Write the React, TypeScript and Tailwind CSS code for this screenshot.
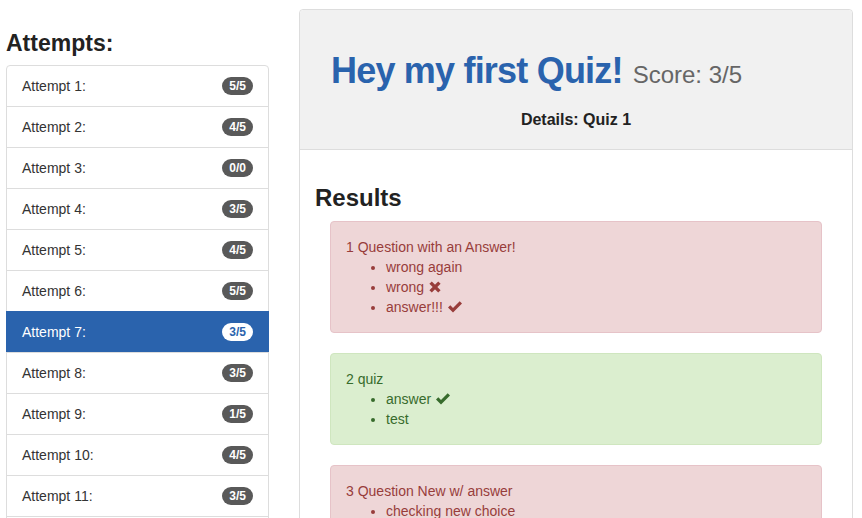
const attempts = [
  "5/5",
  "4/5",
  "0/0",
  "3/5",
  "4/5",
  "5/5",
  "3/5",
  "3/5",
  "1/5",
  "4/5",
  "3/5",
  "2/5",
];

type Choice = { text: string; mark?: "ok" | "wrong" };
type Result = { title: string; correct: boolean; choices: Choice[] };

const results: Result[] = [
  {
    title: "1 Question with an Answer!",
    correct: false,
    choices: [
      { text: "wrong again" },
      { text: "wrong", mark: "wrong" },
      { text: "answer!!!", mark: "ok" },
    ],
  },
  {
    title: "2 quiz",
    correct: true,
    choices: [{ text: "answer", mark: "ok" }, { text: "test" }],
  },
  {
    title: "3 Question New w/ answer",
    correct: false,
    choices: [{ text: "checking new choice" }],
  },
];

function OkIcon() {
  return (
    <svg width="14" height="12" viewBox="0 0 14 12" className="inline-block ml-[5px] -mt-[2px] align-middle">
      <path d="M0 6.6 L2.3 4.3 L5 7 L11.7 0.3 L14 2.6 L5 11.6 Z" fill="currentColor" />
    </svg>
  );
}

function WrongIcon() {
  return (
    <svg width="12" height="12" viewBox="0 0 12 12" className="inline-block ml-[5px] -mt-[2px] align-middle">
      <path d="M1.6 1.6 L10.4 10.4 M10.4 1.6 L1.6 10.4" stroke="currentColor" strokeWidth="3.4" />
    </svg>
  );
}

export default function App() {
  return (
    <div className="flex font-['Liberation_Sans',Arial,sans-serif] text-[#333] bg-white w-[862px] h-[518px] overflow-hidden">
      {/* Left column: attempts */}
      <div className="ml-[6px] w-[263px] shrink-0">
        <h3 className="mt-[30px] mb-[9px] text-[23px] leading-[26px] font-bold text-[#222]">Attempts:</h3>
        <div className="border border-[#ddd] rounded-t-[4px]">
          {attempts.map((score, i) => {
            const active = i === 6;
            return (
              <div
                key={i}
                className={
                  active
                    ? "flex items-center justify-between h-[41px] text-[14px] bg-[#2a63ad] text-white border-t border-[#2a63ad] -mx-px px-[16px]"
                    : "flex items-center justify-between h-[41px] px-[15px] text-[14px] border-t border-[#ddd] first:border-t-0 first:h-[40px]"
                }
              >
                <span>Attempt {i + 1}:</span>
                <span
                  className={
                    active
                      ? "rounded-[10px] bg-white text-[#2a63ad] text-[12px] font-bold leading-[12px] px-[7px] py-[3px]"
                      : "rounded-[10px] bg-[#595959] text-white text-[12px] font-bold leading-[12px] px-[7px] py-[3px]"
                  }
                >
                  {score}
                </span>
              </div>
            );
          })}
        </div>
      </div>

      {/* Right column: quiz panel */}
      <div className="ml-[30px] mt-[9px] w-[554px] shrink-0 border border-[#ddd] rounded-[4px] self-start">
        <div className="bg-[#f1f1f1] border-b border-[#ddd] pt-[41px] pb-[19px] rounded-t-[4px]">
          <h1 className="flex items-baseline gap-[10px] pl-[31px] text-[36px] leading-[40px] font-bold text-[#2a63ad] tracking-[-0.8px]">
            <span>Hey my first Quiz!</span>
            <small className="text-[24px] leading-none font-normal text-[#666] tracking-normal">Score: 3/5</small>
          </h1>
          <div className="mt-[19px] text-center text-[16px] leading-[20px] font-bold text-[#222]">Details: Quiz 1</div>
        </div>
        <div className="px-[15px] pt-[15px] pb-[15px]">
          <h3 className="mt-[20px] mb-[10px] text-[24px] leading-[26px] font-bold text-[#222]">Results</h3>
          {results.map((r) => (
            <div
              key={r.title}
              className={
                r.correct
                  ? "mx-[15px] mb-[20px] p-[15px] border rounded-[4px] text-[14px] leading-[20px] bg-[#dbeecf] border-[#cfe6bf] text-[#376b2c]"
                  : "mx-[15px] mb-[20px] p-[15px] border rounded-[4px] text-[14px] leading-[20px] bg-[#eed6d7] border-[#e6c3c8] text-[#983d3b]"
              }
            >
              <div>{r.title}</div>
              <ul className="list-disc pl-[40px]">
                {r.choices.map((c) => (
                  <li key={c.text}>
                    {c.text}
                    {c.mark === "ok" && <OkIcon />}
                    {c.mark === "wrong" && <WrongIcon />}
                  </li>
                ))}
              </ul>
            </div>
          ))}
        </div>
      </div>
    </div>
  );
}
